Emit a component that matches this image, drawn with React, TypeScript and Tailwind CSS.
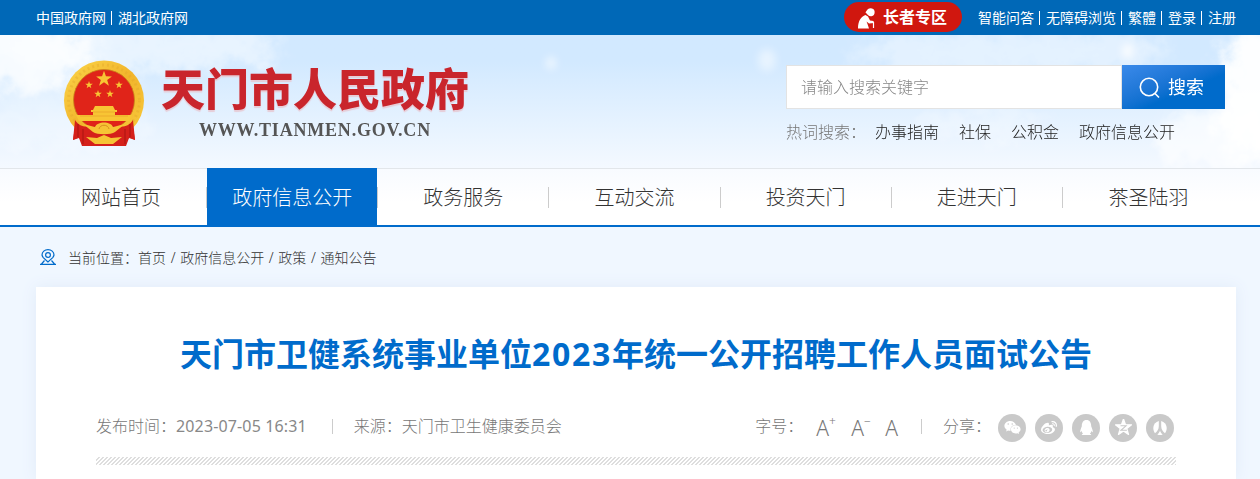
import { FaQq, FaWeibo, FaWeixin } from "react-icons/fa";

const navItems = ["网站首页", "政府信息公开", "政务服务", "互动交流", "投资天门", "走进天门", "茶圣陆羽"];
const userLinks = ["智能问答", "无障碍浏览", "繁體", "登录", "注册"];
const hotWords = ["办事指南", "社保", "公积金", "政府信息公开"];
const crumbs = ["首页", "政府信息公开", "政策", "通知公告"];

const STAR = "M0 -10 L2.35 -3.2 L9.5 -3.1 L3.8 1.2 L5.9 8.1 L0 4 L-5.9 8.1 L-3.8 1.2 L-9.5 -3.1 L-2.35 -3.2 Z";

function Clouds() {
  return (
    <svg className="absolute inset-0 h-full w-full" viewBox="0 0 1260 133" preserveAspectRatio="none" aria-hidden="true">
      <defs>
        <filter id="soft" x="-50%" y="-50%" width="200%" height="200%">
          <feGaussianBlur stdDeviation="9" result="blur" />
          <feTurbulence type="fractalNoise" baseFrequency=".05" numOctaves="4" seed="4" result="noise" />
          <feDisplacementMap in="blur" in2="noise" scale="40" xChannelSelector="R" yChannelSelector="G" />
        </filter>
        <filter id="spot" x="-50%" y="-50%" width="200%" height="200%">
          <feGaussianBlur stdDeviation="4" />
        </filter>
      </defs>
      <g fill="#fff" filter="url(#soft)">
        <ellipse cx="20" cy="20" rx="75" ry="38" opacity=".8" />
        <ellipse cx="140" cy="12" rx="140" ry="26" opacity=".5" />
        <ellipse cx="60" cy="90" rx="90" ry="25" opacity=".3" />
        <ellipse cx="1010" cy="18" rx="160" ry="24" opacity=".4" />
        <ellipse cx="1256" cy="60" rx="40" ry="68" opacity=".95" />
        <ellipse cx="1215" cy="105" rx="60" ry="30" opacity=".65" />
        <ellipse cx="980" cy="90" rx="70" ry="14" opacity=".3" />
      </g>
      <g fill="#fff" filter="url(#spot)">
        <ellipse cx="551" cy="28" rx="5" ry="6" opacity=".7" />
        <ellipse cx="767" cy="25" rx="9" ry="11" opacity=".5" />
        <ellipse cx="1128" cy="16" rx="6" ry="7" opacity=".9" />
      </g>
    </svg>
  );
}

function Emblem() {
  return (
    <svg width="82" height="88" viewBox="0 0 82 88" aria-hidden="true">
      <defs>
        <linearGradient id="gold" x1="0" y1="0" x2="1" y2="1">
          <stop offset="0" stopColor="#fbd64a" />
          <stop offset=".5" stopColor="#f2b52c" />
          <stop offset="1" stopColor="#f8cb3c" />
        </linearGradient>
      </defs>
      <path d="M13 60 L10 80 L16 78 L19 86 L63 86 L66 78 L72 80 L69 60 Z" fill="#cf1f1a" />
      <circle cx="41" cy="40.500" r="40" fill="url(#gold)" />
      <circle cx="41" cy="40.500" r="35.500" fill="none" stroke="#e0a428" strokeWidth="3" strokeDasharray="2 3" opacity=".35" />
      <circle cx="41" cy="40" r="30.500" fill="#e02419" stroke="#c8861b" strokeWidth=".8" />
      <g fill="#f8c534">
        <path d={STAR} transform="translate(41 19) scale(.83)" />
        <path d={STAR} transform="translate(26 25) scale(.4)" />
        <path d={STAR} transform="translate(56 25) scale(.4)" />
        <path d={STAR} transform="translate(35 34) scale(.4)" />
        <path d={STAR} transform="translate(47 34) scale(.4)" />
        <path d="M32 46 h18 l2 4 h2 v2 h-2 v3 h17 l-3 6 H16 l-3 -6 h17 v-3 h-2 v-2 h2 Z" />
      </g>
      <path d="M30 52 H52 M17 56 H65" stroke="#e9a42a" strokeWidth=".8" />
      <path d="M12 60 C20 72 30 64 41 64 C52 64 62 72 70 60 L72 80 L66 77 L62 86 H20 L16 77 L10 80 Z" fill="#d5201a" />
      <path d="M20 64 L32 67 C34 61 48 61 50 67 L62 64 L52 72 C48 75 34 75 30 72 Z" fill="#f6c435" />
      <path d="M23 77 L34 78 L41 75 L48 78 L59 77 L50 84 H32 Z" fill="#f6c435" />
      <path d="M36 69 C37 64 45 64 46 69" fill="none" stroke="#d98f1e" />
      <path d="M15 64 V77 M20 69 V84 M62 69 V84 M67 64 V77" stroke="#a91411" strokeWidth="1" />
    </svg>
  );
}

function ElderIcon() {
  return (
    <svg width="18" height="21" viewBox="0 0 18 21" fill="#fff" aria-hidden="true">
      <path d="M10 1 C12 -.2 16 0 16.500 3 C17 5.500 16 8 13.500 8.200 C10.500 8.500 9.500 6.500 7.500 4.500 C7.500 4 9 2 10 1 Z" />
      <path d="M7.500 7 C3 8.500 0 13 0 20.500 H11 L9.500 16 L8.500 13.500 L11 15.500 L16 15 L15.500 13 L12 12.500 L10 8.500 Z" />
      <path d="M15.500 14 V20" stroke="#fff" strokeWidth="1.200" />
    </svg>
  );
}

function PinIcon() {
  return (
    <svg width="16" height="16" viewBox="0 0 16 16" fill="none" stroke="#006bcb" strokeWidth="1.200" aria-hidden="true">
      <path d="M8 13 L3.300 8.600 A6 6 0 0 1 2 6 C2 2.800 4.700 .6 8 .6 S14 2.800 14 6 A6 6 0 0 1 12.700 8.600 Z" />
      <circle cx="8" cy="6" r="2.400" />
      <path d="M4.500 11.500 L1.500 15 M11.500 11.500 L14.500 15 M0 15.300 H16" />
    </svg>
  );
}

function QzoneIcon() {
  return (
    <svg width="17" height="17" viewBox="-10 -10 20 20" aria-hidden="true">
      <path d={STAR} fill="#fff" stroke="#fff" strokeWidth="1.500" strokeLinejoin="round" />
      <path d="M-3.500 -2 H3 L-3 3.200 H4" fill="none" stroke="#c9c9c9" strokeWidth="1.300" />
    </svg>
  );
}

function RenrenIcon() {
  return (
    <svg width="16" height="16" viewBox="0 0 16 16" fill="#fff" aria-hidden="true">
      <path d="M6.800 1 V6 C6.800 9 5.500 11.500 3 13.200 C.2 9.500 .5 3 6.800 1 Z" />
      <path d="M9.200 1 V6 C9.200 9 10.500 11.500 13 13.200 C15.800 9.500 15.500 3 9.200 1 Z" />
      <path d="M8 10.500 C7.500 12.300 6.600 13.500 5.300 14.500 C7 15.300 9 15.300 10.700 14.500 C9.400 13.500 8.500 12.300 8 10.500 Z" />
    </svg>
  );
}

function TopBar() {
  return (
    <div className="h-[35px] bg-[#0068b7] text-sm text-white">
      <div className="ml-9 flex h-full w-[1200px] items-center justify-between">
        <div className="flex items-center">
          <a href="#">中国政府网</a>
          <span className="mr-[6px] ml-[5px] h-[14px] w-px bg-white" />
          <a href="#">湖北政府网</a>
        </div>
        <div className="flex items-center">
          <a href="#" className="-mt-px mr-[16px] flex h-[30px] w-[118px] items-center rounded-full bg-[#d0170f] pl-[14px] text-base font-bold">
            <span className="mr-[7px] pt-[3px]"><ElderIcon /></span>
            长者专区
          </a>
          {userLinks.map((link, i) => (
            <span key={link} className="flex items-center">
              {i > 0 && <span className="mr-[6px] ml-[5px] h-[14px] w-px bg-white" />}
              <a href="#">{link}</a>
            </span>
          ))}
        </div>
      </div>
    </div>
  );
}

function Header() {
  return (
    <header className="relative h-[133px] bg-linear-to-b from-[#d2e9ff] from-20% to-[#f4f9ff]">
      <Clouds />
      <div className="relative ml-9 flex w-[1200px] justify-between">
        <div className="flex pt-[25px] pl-[27px]">
          <Emblem />
          <div className="pl-[16px]">
            <h1 className="-mt-px text-[44px] leading-[60px] font-black whitespace-nowrap text-[#c9252c] [text-shadow:0_2px_1px_#e6cdd8]">天门市人民政府</h1>
            <p className="mt-px pl-[38px] font-['Liberation_Serif',serif] text-[18px] leading-[20px] font-bold tracking-[0.8px] whitespace-nowrap text-[#555]">WWW.TIANMEN.GOV.CN</p>
          </div>
        </div>
        <div className="w-[450px] pt-[30px]">
          <form className="flex h-[44px] w-[439px]">
            <input
              placeholder="请输入搜索关键字"
              className="w-[336px] border border-[#e3e3e3] bg-white px-[14px] text-base font-light outline-none placeholder:text-[#888]"
            />
            <button type="button" className="flex flex-1 items-center bg-linear-to-br from-[#3a8aea] to-[#006bcb] to-60% pl-[17px] text-[18px] text-white">
              <svg className="mt-[2px] mr-[7px]" width="22" height="22" viewBox="0 0 22 22" fill="none" stroke="#fff" strokeWidth="1.600" aria-hidden="true">
                <circle cx="10" cy="10" r="8.700" />
                <path d="M16 16.500 L20 20.500" />
              </svg>
              搜索
            </button>
          </form>
          <div className="flex gap-[20px] pt-[11px] text-base leading-6 font-light text-[#222]">
            <span className="-mr-[11px] text-[#777]">热词搜索：</span>
            {hotWords.map((word) => (
              <a key={word} href="#">{word}</a>
            ))}
          </div>
        </div>
      </div>
    </header>
  );
}

function Nav() {
  return (
    <nav className="h-[59px] border-t border-b-2 border-t-[#e2e6ea] border-b-[#006bcb] bg-linear-to-b from-[#f8fbff] to-white to-60%">
      <ul className="ml-9 grid h-full w-[1198px] grid-cols-7 text-xl font-light text-[#333]">
        {navItems.map((item, i) => (
          <li key={item} className="flex items-center">
            <a
              href="#"
              className={i === 1 ? "-mt-px flex h-[57px] flex-1 items-center justify-center bg-[#006bcb] pt-[2px] text-white" : "flex-1 pt-[2px] text-center"}
            >
              {item}
            </a>
            {i < 6 && <span className="h-[21px] w-px bg-[#ccc]" />}
          </li>
        ))}
      </ul>
    </nav>
  );
}

function Article() {
  return (
    <main className="ml-9 h-[192px] w-[1200px] bg-white px-[60px] pt-[43px] shadow-[0_0_15px_#e1ebf8]">
      <h2 className="text-center text-[32px] leading-[48px] font-bold whitespace-nowrap text-[#006bcb]">
        天门市卫健系统事业单位<span className="tracking-[1.7px]">2023</span>年统一公开招聘工作人员面试公告
      </h2>
      <div className="mt-[33px] flex h-[30px] items-center justify-between text-base font-light text-[#777]">
        <div className="flex items-center">
          <span>发布时间：<span className="font-normal tracking-[0.14px] text-[#888]">2023-07-05 16:31</span></span>
          <span className="mr-[21px] ml-[25px] h-[15px] w-px bg-[#ccc]" />
          <span>来源：天门市卫生健康委员会</span>
        </div>
        <div className="flex items-center">
          <span className="mr-[-19px]">字号：</span>
          <div className="mt-[6px] ml-[32px] flex text-[21px]">
            <button className="flex w-[35px]">A<sup className="top-[3px] text-xs leading-3">+</sup></button>
            <button className="flex w-[34px]">A<sup className="top-[3px] text-xs leading-3">−</sup></button>
            <button>A</button>
          </div>
          <span className="mr-[21px] ml-[23px] h-[15px] w-px bg-[#ccc]" />
          <span>分享：</span>
          <div className="mt-[3px] mr-[2px] ml-[7px] flex gap-[9px] text-white">
            {[<FaWeixin size={17} />, <FaWeibo size={16} />, <FaQq size={15} />, <QzoneIcon />, <RenrenIcon />].map((icon, i) => (
              <a key={i} href="#" className="flex size-[28px] items-center justify-center rounded-full bg-[#c9c9c9]">{icon}</a>
            ))}
          </div>
        </div>
      </div>
      <div className="mt-[16px] h-[8px] bg-[linear-gradient(135deg,#fff_32%,#dedede_32%_50%,#fff_50%_82%,#dedede_82%)] bg-[length:4px_4px]" />
    </main>
  );
}

export default function App() {
  return (
    <div className="h-[479px] overflow-hidden bg-[#f0f7ff] font-['Noto_Sans','Noto_Sans_CJK_SC',sans-serif]">
      <TopBar />
      <Header />
      <Nav />
      <div className="ml-9 flex h-[60px] w-[1200px] items-center gap-[12px] pl-[4px] text-sm text-[#333]">
        <PinIcon />
        <span className="pt-px font-light [word-spacing:1px]">当前位置：{crumbs.join(" / ")}</span>
      </div>
      <Article />
    </div>
  );
}
